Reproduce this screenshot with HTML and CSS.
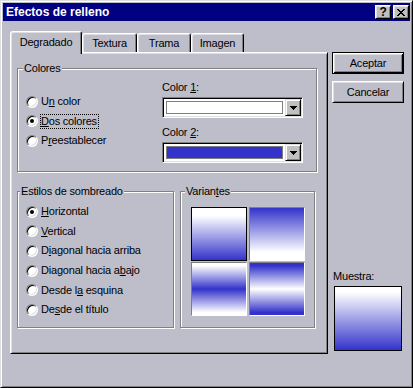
FILE: index.html
```html
<!DOCTYPE html>
<html lang="es">
  <head>
    <meta charset="UTF-8" />
    <title>Efectos de relleno</title>
    <link rel="stylesheet" href="styles.css">
  </head>
  <body>
    <div class="window">
      <!-- Title bar -->
      <div class="titlebar">
        <span class="title">Efectos de relleno</span>
        <div class="title-buttons">
          <span class="title-btn help">?</span>
          <span class="title-btn close">
            <svg width="8" height="7" viewBox="0 0 8 7" shape-rendering="crispEdges">
              <path d="M0 0h2v1H0z M6 0h2v1H6z M1 1h2v1H1z M5 1h2v1H5z M2 2h4v1H2z M3 3h2v1H3z M2 4h4v1H2z M1 5h2v1H1z M5 5h2v1H5z M0 6h2v1H0z M6 6h2v1H6z" fill="#000" />
            </svg>
          </span>
        </div>
      </div>

      <div class="dialog">
        <div class="left">
          <div class="tabs">
            <div class="tab active">Degradado</div>
            <div class="tab">Textura</div>
            <div class="tab">Trama</div>
            <div class="tab">Imagen</div>
          </div>

          <div class="panel">
            <!-- Colores -->
            <div class="group colores">
              <span class="group-title">Colores</span>
              <div class="radios">
                <div class="radio-row"><span class="radio"></span><span class="label">U<u>n</u> color</span></div>
                <div class="radio-row"><span class="radio checked"></span><span class="label focus"><u>D</u>os colores</span></div>
                <div class="radio-row"><span class="radio"></span><span class="label">P<u>r</u>eestablecer</span></div>
              </div>
              <div class="combos">
                <div class="field-label">Color <u>1</u>:</div>
                <div class="combo">
                  <div class="combo-field"><div class="swatch white"></div></div>
                  <div class="combo-btn">
                    <svg width="7" height="4" viewBox="0 0 7 4" shape-rendering="crispEdges">
                      <path d="M0 0h7v1H0z M1 1h5v1H1z M2 2h3v1H2z M3 3h1v1H3z" fill="#000" />
                    </svg>
                  </div>
                </div>
                <div class="field-label second">Color <u>2</u>:</div>
                <div class="combo">
                  <div class="combo-field"><div class="swatch blue"></div></div>
                  <div class="combo-btn">
                    <svg width="7" height="4" viewBox="0 0 7 4" shape-rendering="crispEdges">
                      <path d="M0 0h7v1H0z M1 1h5v1H1z M2 2h3v1H2z M3 3h1v1H3z" fill="#000" />
                    </svg>
                  </div>
                </div>
              </div>
            </div>

            <div class="lower">
              <!-- Estilos de sombreado -->
              <div class="group estilos">
                <span class="group-title">Estilos de sombreado</span>
                <div class="radio-row"><span class="radio checked"></span><span class="label"><u>H</u>orizontal</span></div>
                <div class="radio-row"><span class="radio"></span><span class="label"><u>V</u>ertical</span></div>
                <div class="radio-row"><span class="radio"></span><span class="label">D<u>i</u>agonal hacia arriba</span></div>
                <div class="radio-row"><span class="radio"></span><span class="label">Diagonal hacia a<u>b</u>ajo</span></div>
                <div class="radio-row"><span class="radio"></span><span class="label">Desde l<u>a</u> esquina</span></div>
                <div class="radio-row"><span class="radio"></span><span class="label">De<u>s</u>de el título</span></div>
              </div>

              <!-- Variantes -->
              <div class="group variantes">
                <span class="group-title">Varian<u>t</u>es</span>
                <div class="variant-grid">
                  <div class="variant down selected"></div>
                  <div class="variant up"></div>
                  <div class="variant center"></div>
                  <div class="variant edges"></div>
                </div>
              </div>
            </div>
          </div>
        </div>

        <div class="right">
          <button class="btn default">Aceptar</button>
          <button class="btn">Cancelar</button>
          <div class="sample-block">
            <div class="sample-label">Muestra:</div>
            <div class="sample"></div>
          </div>
        </div>
      </div>
    </div>
  </body>
</html>
```

FILE: styles.css
```css
* {
  margin: 0;
  padding: 0;
  box-sizing: border-box;
}

body {
  font-family: "Liberation Sans", Arial, sans-serif;
  font-size: 11px;
  letter-spacing: -0.2px;
  color: #000;
  background: #bebecb;
}

u {
  text-decoration: underline;
  text-underline-offset: 1px;
}

.window {
  width: 413px;
  height: 388px;
  padding: 2px;
  background: #bebecb;
  border: 1px solid;
  border-color: #dfdfdf #000 #000 #dfdfdf;
  box-shadow: inset 1px 1px #fff, inset -1px -1px #808080;
}

/* Title bar */
.titlebar {
  height: 18px;
  background: #000080;
  color: #fff;
  display: flex;
  align-items: center;
  justify-content: space-between;
  padding: 0 1px 0 3px;
}

.title {
  font-size: 12px;
  font-weight: bold;
  letter-spacing: 0;
}

.title-buttons {
  display: flex;
  gap: 2px;
}

.title-btn {
  width: 16px;
  height: 14px;
  background: #c0c0c0;
  color: #000;
  border: 1px solid;
  border-color: #fff #000 #000 #fff;
  box-shadow: inset 1px 1px #dfdfdf, inset -1px -1px #808080;
  display: flex;
  align-items: center;
  justify-content: center;
}

.help {
  font-weight: bold;
  font-size: 12px;
  line-height: 12px;
}

/* Dialog body */
.dialog {
  display: flex;
  gap: 4px;
  padding: 10px 0 0 7px;
}

.left {
  width: 318px;
}

.tabs {
  display: flex;
  align-items: flex-end;
  height: 21px;
}

.tab {
  height: 19px;
  padding-top: 3px;
  text-align: center;
  border: 1px solid;
  border-bottom: none;
  border-color: #fff #000 #000 #fff;
  border-radius: 3px 3px 0 0;
  box-shadow: inset 1px 1px #dfdfdf, inset -1px 0 #808080;
  background: #bebecb;
}

.tab:nth-child(1) { width: 72px; }
.tab:nth-child(2) { width: 55px; }
.tab:nth-child(3) { width: 54px; }
.tab:nth-child(4) { width: 53px; }

.tab.active {
  height: 23px;
  margin-bottom: -2px;
  padding-top: 4px;
  position: relative;
  z-index: 1;
}

.panel {
  height: 302px;
  padding: 15px 0 0 6px;
  border: 1px solid;
  border-color: #fff #000 #000 #fff;
  box-shadow: inset 1px 1px #dfdfdf, inset -1px -1px #808080;
}

/* Group boxes */
.group {
  position: relative;
  border: 1px solid #808080;
  box-shadow: inset 1px 1px #fff, 1px 1px #fff;
}

.group-title {
  position: absolute;
  top: -7px;
  left: 5px;
  padding: 0 1px;
  line-height: 13px;
  background: #bebecb;
}

.colores {
  width: 300px;
  height: 104px;
  padding: 12px 0 0 8px;
  display: flex;
}

.radios {
  width: 136px;
  margin-top: 11px;
}

.colores .radio-row {
  height: 19.5px;
}

.radio-row {
  display: flex;
  align-items: center;
  height: 19.6px;
}

.radio {
  position: relative;
  width: 12px;
  height: 12px;
  flex-shrink: 0;
  border-radius: 50%;
  background: #fff;
  border: 1px solid;
  border-color: #808080 #fff #fff #808080;
  box-shadow: inset 1px 1px #000, inset -1px -1px #dfdfdf;
}

.radio.checked::after {
  content: "";
  position: absolute;
  left: 3px;
  top: 3px;
  width: 4px;
  height: 4px;
  border-radius: 50%;
  background: #000;
}

.label {
  margin-left: 2px;
  padding-right: 1px;
  line-height: 13px;
  border: 1px dotted transparent;
  white-space: nowrap;
}

.label.focus {
  border-color: #000;
}

.combos {
  width: 141px;
}

.field-label {
  line-height: 13px;
}

.field-label.second {
  margin-top: 8px;
}

.combo {
  display: flex;
  height: 21px;
  margin-top: 3px;
  padding: 1px;
  background: #fff;
  border: 1px solid;
  border-color: #808080 #fff #fff #808080;
  box-shadow: inset 1px 1px #000, inset -1px -1px #dfdfdf;
}

.combo-field {
  flex: 1;
  padding: 2px;
}

.swatch {
  height: 100%;
  border: 1px solid #808080;
}

.swatch.white {
  background: #fff;
}

.swatch.blue {
  background: #3333cc;
}

.combo-btn {
  width: 16px;
  height: 17px;
  background: #c0c0c0;
  border: 1px solid;
  border-color: #dfdfdf #000 #000 #dfdfdf;
  box-shadow: inset 1px 1px #fff, inset -1px -1px #808080;
  display: flex;
  align-items: center;
  justify-content: center;
}

.lower {
  display: flex;
  margin-top: 19px;
}

.estilos {
  width: 157px;
  height: 137px;
  padding: 10px 0 0 8px;
}

.estilos .group-title {
  left: 2px;
}

.variantes {
  width: 135px;
  height: 137px;
  margin-left: 6px;
  padding: 15px 0 0 10px;
}

.variantes .group-title {
  left: 4px;
}

.variant-grid {
  display: grid;
  grid-template-columns: 56px 56px;
  grid-template-rows: 54px 54px;
  column-gap: 2px;
  row-gap: 1px;
}

.variant {
  border: 1px solid;
  border-color: #808080 #fff #fff #808080;
}

.variant.selected {
  border-color: #000;
}

.variant.down {
  background: linear-gradient(#fff 15%, #3333cc);
}

.variant.up {
  background: linear-gradient(#3333cc, #fff 85%);
}

.variant.center {
  background: linear-gradient(#fff 5%, #3333cc 50%, #fff 95%);
}

.variant.edges {
  background: linear-gradient(#3333cc 5%, #fff 50%, #3333cc 95%);
}

/* Right column */
.right {
  width: 72px;
  display: flex;
  flex-direction: column;
  padding: 21px 0 3px;
}

.btn {
  height: 22px;
  font-family: inherit;
  font-size: 11px;
  letter-spacing: inherit;
  color: #000;
  background: #bebecb;
  border: 1px solid;
  border-color: #fff #000 #000 #fff;
  box-shadow: inset 1px 1px #dfdfdf, inset -1px -1px #808080;
}

.btn + .btn {
  margin-top: 7px;
}

.btn.default {
  border-color: #000;
  box-shadow: inset 1px 1px #fff, inset -1px -1px #000, inset 2px 2px #dfdfdf, inset -2px -2px #808080;
}

.sample-block {
  margin-top: auto;
}

.sample-label {
  line-height: 13px;
  margin: 0 0 3px 1px;
}

.sample {
  width: 68px;
  height: 65px;
  margin-left: 2px;
  border: 1px solid #000;
  background: linear-gradient(#fff 8%, #3333cc);
}
```
